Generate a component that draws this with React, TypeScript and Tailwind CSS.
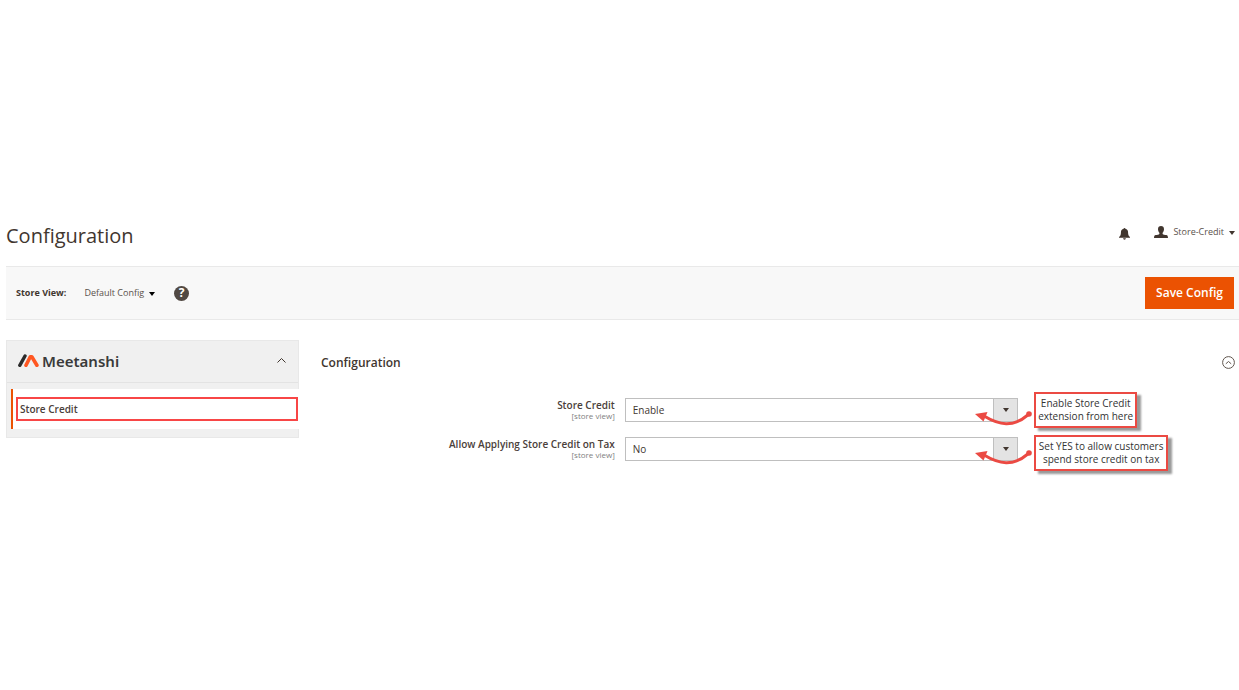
import { useState } from "react"

interface FieldProps {
  id:       string
  label:    string
  value:    string
  options:  string[]
  note:     [string, string]
  noteSize: string
}

const FIELDS: FieldProps[] = [
  {
    id: "store-credit",
    label: "Store Credit",
    value: "Enable",
    options: ["Enable", "Disable"],
    note: ["Enable Store Credit", "extension from here"],
    noteSize: "w-[103px] -top-[6px]",
  },
  {
    id: "credit-on-tax",
    label: "Allow Applying Store Credit on Tax",
    value: "No",
    options: ["Yes", "No"],
    note: ["Set YES to allow customers", "spend store credit on tax"],
    noteSize: "w-[134px] -top-[2px]",
  },
]

function Caret({ className }: { className: string }) {
  return (
    <svg viewBox="0 0 6 4" className={className} fill="currentColor" aria-hidden="true">
      <path d="M0 0h6L3 4Z"/>
    </svg>
  )
}

function MeetanshiLogo() {
  return (
    <span className="flex items-center gap-[3px]">
      <svg viewBox="0 0 21 13" className="h-[13px] w-[21px]" fill="none" aria-hidden="true">
        <path d="M1.800 11.300 7 2" stroke="#2b2b2b" strokeWidth="3.400" strokeLinecap="round"/>
        <path d="M8 11.300 12.300 2.800 13.800 2.800 18.900 11.300" stroke="#ff5722" strokeWidth="3.600" strokeLinecap="round" strokeLinejoin="round"/>
      </svg>
      <span className="font-['Noto_Sans'] text-[15px] font-semibold leading-5 text-[#3a3a3a]">Meetanshi</span>
    </span>
  )
}

function PageHeader() {
  return (
    <header className="flex h-[50px] items-start justify-between pl-[6px] pr-1">
      <h1 className="text-[20px] leading-10 text-[#41362f]">Configuration</h1>
      <div className="flex h-8 items-center">
        <button aria-label="Notifications" className="mr-6 text-[#41362f]">
          <svg viewBox="0 0 12 13" className="mt-[3px] h-3 w-[11px]" fill="currentColor">
            <path d="M6 0c.6 0 1 .4 1 .9 1.900.5 2.900 1.900 2.900 3.900 0 2.700.6 3.900 2.100 5.100v.8H0v-.8c1.500-1.200 2.100-2.400 2.100-5.100 0-2 1-3.400 2.900-3.900 0-.5.4-.9 1-.9ZM4.500 11.200h3c0 .8-.6 1.500-1.500 1.500s-1.500-.7-1.500-1.500Z"/>
          </svg>
        </button>
        <button className="flex items-center text-[9px] text-[#5a514b]">
          <svg viewBox="0 0 14 12" className="mr-[5px] h-3 w-[14px] text-[#41362f]" fill="currentColor" aria-hidden="true">
            <path d="M7 0c1.900 0 3 1.200 3 3.200 0 1.500-.7 2.900-1.400 3.500v1.300c.6.600 2.300.8 3.600 1.100 1.300.4 1.700.9 1.800 2.900H0c.1-2 .5-2.500 1.800-2.900 1.300-.3 3-.5 3.600-1.100V6.700C4.700 6.100 4 4.700 4 3.200 4 1.200 5.100 0 7 0Z"/>
          </svg>
          Store-Credit
          <Caret className="ml-[5px] mt-[2px] h-1 w-[6px] text-[#41362f]"/>
        </button>
      </div>
    </header>
  )
}

function Toolbar() {
  return (
    <div className="ml-[6px] flex h-[54px] items-center justify-between border-y border-[#e9e9e9] bg-[#f8f8f8] pl-[10px] pr-[5px]">
      <div className="flex items-center text-[9px] text-[#41362f]">
        <span className="font-bold">Store View:</span>
        <button className="ml-[18px] flex items-center text-[#5a514b]">
          Default Config
          <Caret className="ml-[5px] mt-[2px] h-1 w-[6px] text-black"/>
        </button>
        <button aria-label="Help" className="ml-[19px] flex h-[15px] w-[15px] items-center justify-center rounded-full bg-[#514943] text-[12px] font-bold leading-none text-white">
          ?
        </button>
      </div>
      <button className="h-8 bg-[#eb5202] px-[11px] text-[12px] font-semibold text-white">
        Save Config
      </button>
    </div>
  )
}

function Sidebar() {
  return (
    <nav className="w-[293px] shrink-0 border border-[#e8e8e8] bg-[#f0f0f0] pb-2">
      <button className="flex h-[42px] w-full items-center justify-between border-b border-[#e3e3e3] pb-[2px] pl-[11px] pr-3">
        <MeetanshiLogo/>
        <svg viewBox="0 0 9 5" className="h-[5px] w-[9px]" fill="none" stroke="#41362f" aria-hidden="true">
          <path d="m.5 4.500 4-4 4 4"/>
        </svg>
      </button>
      <div className="-mr-px ml-[4px] mt-[6px] border-l-2 border-[#eb5202] bg-white py-2 pl-[3px] pr-px">
        <a href="#store-credit" className="block border-2 border-[#f84646] px-[2px] text-[10px] font-semibold leading-5 text-[#4a403a]">
          Store Credit
        </a>
      </div>
    </nav>
  )
}

// Red arrow from the note back to the end of the select
function NoteArrow() {
  return (
    <svg viewBox="0 0 58 20" className="absolute left-full top-2 -ml-[43px] h-5 w-[58px]" aria-hidden="true">
      <path d="M9 10C24 19 38 22 53.500 8.500" fill="none" stroke="#eb4a43" strokeWidth="3"/>
      <path d="M0 8 12.500 6 8.500 15.500Z" fill="#eb4a43"/>
      <circle cx="54" cy="8" r="2.800" fill="#eb4a43"/>
    </svg>
  )
}

function Field({ id, label, value, options, note, noteSize }: FieldProps) {
  const [current, setCurrent] = useState(value)
  return (
    <div className="flex items-start">
      <label htmlFor={id} className="w-[32%] pt-px text-right text-[10px] font-semibold leading-3 text-[#4a403a]">
        {label}
        <span className="block text-[8px] font-normal leading-[10px] text-[#808080]">[store view]</span>
      </label>
      <div className="relative ml-[10px] w-3/7">
        <select id={id} value={current} onChange={e => setCurrent(e.target.value)}
          className="block h-6 w-full appearance-none border border-[#bfbfbf] bg-white pl-[7px] text-[10px] text-[#41362f]">
          {options.map(option => <option key={option}>{option}</option>)}
        </select>
        <span className="pointer-events-none absolute inset-y-0 right-0 flex w-[25px] items-center justify-center border border-[#bfbfbf] bg-[#e3e3e3] text-[#41362f]">
          <Caret className="h-1 w-[6px]"/>
        </span>
        <NoteArrow/>
        <p className={`absolute left-full ml-4 flex flex-col items-center whitespace-nowrap border-2 border-[#eb4a43] bg-white py-[3px] text-[10px] leading-[13px] text-[#333] shadow-[4px_3px_2px_#999] ${noteSize}`}>
          <span>{note[0]}</span>
          <span>{note[1]}</span>
        </p>
      </div>
    </div>
  )
}

export default function App() {
  return (
    <div className="min-h-screen bg-white pt-[216px] font-['Open_Sans',sans-serif]">
      <PageHeader/>
      <Toolbar/>
      <div className="flex items-start pl-[6px] pt-5">
        <Sidebar/>
        <main className="ml-[22px] flex-1">
          <div className="flex h-[45px] items-center justify-between pr-[4px]">
            <h2 className="text-[12px] font-semibold text-[#41362f]">Configuration</h2>
            <button aria-label="Collapse section">
              <svg viewBox="0 0 13 13" className="h-[13px] w-[13px]" fill="none" stroke="#60564e">
                <circle cx="6.500" cy="6.500" r="5.900"/>
                <path d="m3.800 7.800 2.700-2.300 2.700 2.300"/>
              </svg>
            </button>
          </div>
          <div className="flex flex-col gap-[15px] pt-[13px]">
            {FIELDS.map(field => <Field key={field.id} {...field}/>)}
          </div>
        </main>
      </div>
    </div>
  )
}
